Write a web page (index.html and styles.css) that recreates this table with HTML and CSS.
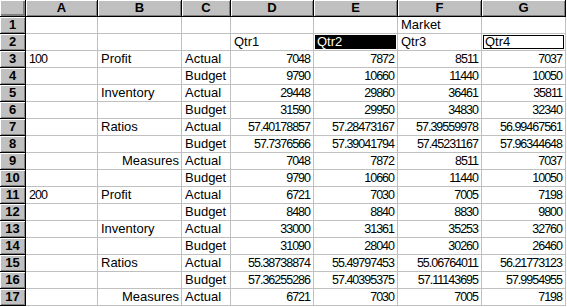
FILE: index.html
```html
<!DOCTYPE html>
<html>
<head>
<meta charset="utf-8">
<link rel="stylesheet" href="styles.css">
</head>
<body>
<div class="sheet">
  <div class="hd corner"></div>
  <div class="hd col">A</div><div class="hd col">B</div><div class="hd col">C</div><div class="hd col">D</div><div class="hd col">E</div><div class="hd col">F</div><div class="hd col">G</div>

  <div class="hd row">1</div>
  <div class="c"></div><div class="c"></div><div class="c"></div><div class="c"></div><div class="c"></div><div class="c">Market</div><div class="c"></div>

  <div class="hd row">2</div>
  <div class="c"></div><div class="c"></div><div class="c"></div><div class="c">Qtr1</div><div class="c sel"><span>Qtr2</span></div><div class="c">Qtr3</div><div class="c active"><span>Qtr4</span></div>

  <div class="hd row">3</div>
  <div class="c num l">100</div><div class="c">Profit</div><div class="c">Actual</div><div class="c num">7048</div><div class="c num">7872</div><div class="c num">8511</div><div class="c num">7037</div>

  <div class="hd row">4</div>
  <div class="c"></div><div class="c"></div><div class="c">Budget</div><div class="c num">9790</div><div class="c num">10660</div><div class="c num">11440</div><div class="c num">10050</div>

  <div class="hd row">5</div>
  <div class="c"></div><div class="c">Inventory</div><div class="c">Actual</div><div class="c num">29448</div><div class="c num">29860</div><div class="c num">36461</div><div class="c num">35811</div>

  <div class="hd row">6</div>
  <div class="c"></div><div class="c"></div><div class="c">Budget</div><div class="c num">31590</div><div class="c num">29950</div><div class="c num">34830</div><div class="c num">32340</div>

  <div class="hd row">7</div>
  <div class="c"></div><div class="c">Ratios</div><div class="c">Actual</div><div class="c num">57.40178857</div><div class="c num">57.28473167</div><div class="c num">57.39559978</div><div class="c num">56.99467561</div>

  <div class="hd row">8</div>
  <div class="c"></div><div class="c"></div><div class="c">Budget</div><div class="c num">57.7376566</div><div class="c num">57.39041794</div><div class="c num">57.45231167</div><div class="c num">57.96344648</div>

  <div class="hd row">9</div>
  <div class="c"></div><div class="c r">Measures</div><div class="c">Actual</div><div class="c num">7048</div><div class="c num">7872</div><div class="c num">8511</div><div class="c num">7037</div>

  <div class="hd row">10</div>
  <div class="c"></div><div class="c"></div><div class="c">Budget</div><div class="c num">9790</div><div class="c num">10660</div><div class="c num">11440</div><div class="c num">10050</div>

  <div class="hd row">11</div>
  <div class="c num l">200</div><div class="c">Profit</div><div class="c">Actual</div><div class="c num">6721</div><div class="c num">7030</div><div class="c num">7005</div><div class="c num">7198</div>

  <div class="hd row">12</div>
  <div class="c"></div><div class="c"></div><div class="c">Budget</div><div class="c num">8480</div><div class="c num">8840</div><div class="c num">8830</div><div class="c num">9800</div>

  <div class="hd row">13</div>
  <div class="c"></div><div class="c">Inventory</div><div class="c">Actual</div><div class="c num">33000</div><div class="c num">31361</div><div class="c num">35253</div><div class="c num">32760</div>

  <div class="hd row">14</div>
  <div class="c"></div><div class="c"></div><div class="c">Budget</div><div class="c num">31090</div><div class="c num">28040</div><div class="c num">30260</div><div class="c num">26460</div>

  <div class="hd row">15</div>
  <div class="c"></div><div class="c">Ratios</div><div class="c">Actual</div><div class="c num">55.38738874</div><div class="c num">55.49797453</div><div class="c num">55.06764011</div><div class="c num">56.21773123</div>

  <div class="hd row">16</div>
  <div class="c"></div><div class="c"></div><div class="c">Budget</div><div class="c num">57.36255286</div><div class="c num">57.40395375</div><div class="c num">57.11143695</div><div class="c num">57.9954955</div>

  <div class="hd row">17</div>
  <div class="c"></div><div class="c r">Measures</div><div class="c">Actual</div><div class="c num">6721</div><div class="c num">7030</div><div class="c num">7005</div><div class="c num">7198</div>
</div>
</body>
</html>
```

FILE: styles.css
```css
html, body {
  margin: 0;
  padding: 0;
  background: #ffffff;
}

.sheet {
  display: grid;
  grid-template-columns: 26px 72px 84px 49px 83px 84px 84px 84px;
  grid-auto-rows: 17px;
  font-family: "Liberation Sans", Arial, sans-serif;
  font-size: 13px;
  color: #000000;
}

.sheet > div {
  box-sizing: border-box;
  border-right: 1px solid #c0c0c0;
  border-bottom: 1px solid #c0c0c0;
  line-height: 16px;
  white-space: nowrap;
  overflow: hidden;
}

.c {
  padding: 0 2px 0 3px;
  text-align: left;
}

.c.r {
  text-align: right;
}

.c.num {
  text-align: right;
  font-size: 12.5px;
  letter-spacing: -1px;
  padding-right: 3px;
}

.c.num.l {
  text-align: left;
}

.hd {
  background: #c0c0c0;
  font-weight: bold;
  text-align: center;
  font-size: 13px;
  box-shadow: inset 1px 1px 0 #ffffff, inset -1px -1px 0 #808080;
}

.sheet > .hd {
  border-right: 1px solid #000000;
  border-bottom: 1px solid #000000;
}

.corner {
  box-shadow: inset 1px 1px 0 #ffffff, inset -2px -2px 0 #808080;
}

.sel {
  padding: 1px;
}

.sel span {
  display: block;
  background: #000000;
  color: #ffffff;
  height: 14px;
  line-height: 14px;
  padding-left: 2px;
}

.active {
  padding: 1px;
}

.active span {
  display: block;
  border: 1px solid #000000;
  height: 14px;
  box-sizing: border-box;
  line-height: 12px;
  padding-left: 1px;
}
```
